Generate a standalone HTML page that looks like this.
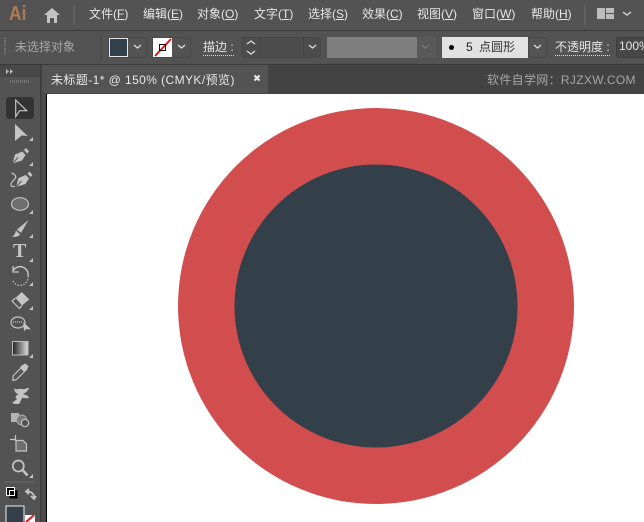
<!DOCTYPE html>
<html><head><meta charset="utf-8"><style>
html,body{margin:0;padding:0;background:#535353}
#r{position:relative;width:644px;height:522px;overflow:hidden;background:#535353;font-family:"Liberation Sans","Noto Sans CJK SC",sans-serif}
.a{position:absolute}
.t{position:absolute;white-space:nowrap;font-size:12px;line-height:16px;color:#e6e6e6}
.t u{text-underline-offset:1px}
.b{position:absolute;box-sizing:border-box;border:1px solid #484848;border-radius:3px}
svg{position:absolute;left:0;top:0}
</style></head><body><div id="r">
<div class="a" style="left:0;top:30px;width:644px;height:1px;background:#3a3a3a"></div>
<div class="a" style="left:0;top:31px;width:644px;height:33px;background:#535353"></div>
<div class="a" style="left:0;top:64px;width:644px;height:30px;background:#434343;border-top:1px solid #3a3a3a;box-sizing:border-box"></div>
<div class="t" style="left:9px;top:1px;font-size:20px;line-height:26px;font-weight:bold;color:#b07a56;transform:scaleX(.87);transform-origin:0 0">Ai</div>
<div class="t" style="left:89px;top:6px">文件(<u>F</u>)</div>
<div class="t" style="left:143px;top:6px">编辑(<u>E</u>)</div>
<div class="t" style="left:197px;top:6px">对象(<u>O</u>)</div>
<div class="t" style="left:254px;top:6px">文字(<u>T</u>)</div>
<div class="t" style="left:308px;top:6px">选择(<u>S</u>)</div>
<div class="t" style="left:362px;top:6px">效果(<u>C</u>)</div>
<div class="t" style="left:417px;top:6px">视图(<u>V</u>)</div>
<div class="t" style="left:472px;top:6px">窗口(<u>W</u>)</div>
<div class="t" style="left:531px;top:6px">帮助(<u>H</u>)</div>
<div class="t" style="left:15px;top:39px;color:#a8a8a8;font-size:12px">未选择对象</div>
<div class="b" style="left:108px;top:37px;width:39px;height:21px"></div>
<div class="a" style="left:109px;top:38px;width:19px;height:19px;background:#333f49;box-sizing:border-box;border:1px solid #e8e8e8"></div>
<div class="b" style="left:152px;top:37px;width:39px;height:21px"></div>
<div class="a" style="left:153px;top:38px;width:19px;height:19px;background:#fff"></div>
<div class="t" style="left:203px;top:40px;font-size:12px;border-bottom:1px dotted #ddd;line-height:15px">描边 :</div>
<div class="b" style="left:241px;top:37px;width:80px;height:21px;background:#4c4c4c"></div>
<div class="a" style="left:259px;top:38px;width:1px;height:19px;background:#444"></div>
<div class="a" style="left:303px;top:38px;width:1px;height:19px;background:#444"></div>
<div class="a" style="left:327px;top:37px;width:90px;height:21px;background:#7e7e7e"></div>
<div class="a" style="left:417px;top:37px;width:19px;height:21px;background:#595959"></div>
<div class="a" style="left:442px;top:37px;width:86px;height:21px;background:#e2e2e2"></div>
<div class="b" style="left:528px;top:37px;width:19px;height:21px"></div>
<div class="a" style="left:449px;top:45px;width:5px;height:5px;border-radius:50%;background:#000"></div>
<div class="t" style="left:466px;top:40px;font-size:12px;line-height:15px;color:#222">5</div>
<div class="t" style="left:479px;top:40px;font-size:12px;line-height:15px;color:#333">点圆形</div>
<div class="t" style="left:555px;top:40px;font-size:12px;line-height:15px;border-bottom:1px dotted #ddd">不透明度 :</div>
<div class="b" style="left:616px;top:37px;width:40px;height:21px;background:#474747;border-color:#3f3f3f"></div>
<div class="t" style="left:619px;top:38px;font-size:12px">100%</div>
<div class="a" style="left:42px;top:65px;width:226px;height:28px;background:#535353"></div>
<div class="t" style="left:51px;top:72px;font-size:12px;color:#e8e8e8;letter-spacing:.42px">未标题-1* @ 150% (CMYK/预览)</div>
<div class="t" style="left:487px;top:72px;font-size:12px;color:#a5a5a5;letter-spacing:.32px">软件自学网：RJZXW.COM</div>
<div class="a" style="left:0;top:65px;width:40px;height:457px;background:#535353"></div>
<div class="a" style="left:0;top:65px;width:40px;height:12px;background:#484848"></div>
<div class="a" style="left:40px;top:65px;width:1px;height:457px;background:#3c3c3c"></div>
<div class="a" style="left:41px;top:65px;width:1px;height:457px;background:#434343"></div>
<div class="a" style="left:42px;top:93px;width:4px;height:429px;background:#4c4c4c"></div>
<div class="a" style="left:46px;top:94px;width:598px;height:428px;background:#fff;border-left:1px solid #000;box-sizing:border-box"></div>
<div class="a" style="left:6px;top:97px;width:28px;height:22px;background:#333;border-radius:3px"></div>
<div class="t" style="left:13px;top:240px;font:bold 20px/22px 'Liberation Serif',serif;color:#c4c4c4">T</div>
<svg width="644" height="522" viewBox="0 0 644 522">
<circle cx="376" cy="306" r="198" fill="#d14d4e"/>
<circle cx="376" cy="306" r="141.500" fill="#333f49"/>
<path d="M44 15 L52 8 L60 15 H57 V23 H54 V18 H50 V23 H47 V15Z" fill="#c4c4c4"/>
<path d="M74 5V25" stroke="#666" stroke-width="1.500"/>
<path d="M585 5V25" stroke="#666" stroke-width="1.500"/>
<path d="M597 8h8v11h-8zM606 8h8v5h-8zM606 14h8v5h-8z" fill="#bdbdbd"/>
<path d="M623 12l4 3 4-3" fill="none" stroke="#ddd" stroke-width="1.300"/>
<path d="M5 38v18" stroke="#777" stroke-width="2" stroke-dasharray="1 1"/>
<path d="M101 34v27" stroke="#444"/>
<g fill="none" stroke="#ddd" stroke-width="1.300">
<path d="M134 45l3.500 3 3.500-3M178 45l3.500 3 3.500-3M309 45l3.500 3 3.500-3M534 45l3.500 3 3.500-3"/>
<path d="M247 44l4-3 4 3M247 51l4 3 4-3"/>
</g>
<path d="M422 45l3.500 3 3.500-3" fill="none" stroke="#777" stroke-width="1.300"/>
<path d="M155 56L171 39" stroke="#e8141c" stroke-width="2"/>
<rect x="159.500" y="44.500" width="6" height="6" fill="none" stroke="#111"/>
<path d="M254.500 75.500l5 5M259.500 75.500l-5 5" stroke="#eee" stroke-width="2"/>
<path d="M6 69l3 2.500-3 2.500zM10 69l3 2.500-3 2.500z" fill="#bbb"/>
<path d="M10 81.500h19" stroke="#777" stroke-width="3" stroke-dasharray="1 1"/>

<!-- selection -->
<path d="M15.700 100L26.700 110.700H19.500L15.700 116.700Z" fill="none" stroke="#c4c4c4" stroke-width="1.200"/>
<!-- direct -->
<path d="M15 124L27.700 136L21.700 135.500L15 141Z" fill="#c4c4c4"/>
<!-- pen -->
<path d="M12.500 163.500L15 154.500L22.500 151.500L25.500 155L22 160.500Z" fill="#c4c4c4"/>
<path d="M24 150L26 148L29 151.500L27 153.500Z" fill="#c4c4c4"/>
<path d="M12.500 163.500L18 157.500" stroke="#535353"/>
<!-- curvature -->
<path d="M16 187L18.500 178L26 175L29 178.500L25.500 184Z" fill="#c4c4c4"/>
<path d="M27.500 173.500L29.500 171.500L32.500 175L30.500 177Z" fill="#c4c4c4"/>
<path d="M16 187L21.500 181" stroke="#535353"/>
<path d="M11.500 173c3 1 5 3 4 5-1 2-5 4-4.500 7 .5 2 3 2 4 1" fill="none" stroke="#c4c4c4" stroke-width="1.200"/>
<!-- ellipse -->
<ellipse cx="20" cy="204" rx="8.500" ry="6.300" fill="#6e6e6e" stroke="#c4c4c4" stroke-width="1.200"/>
<!-- brush -->
<path d="M28.500 220L21 233L17 229.500Z" fill="#c4c4c4"/>
<path d="M16 230.500L20 234.500Q19 237 12 237Q15 235 16 230.500Z" fill="#c4c4c4"/>
<!-- rotate -->
<path d="M13 271a8 8 0 0 1 15 5" fill="none" stroke="#c4c4c4" stroke-width="1.500"/>
<path d="M28 276a8 8 0 0 1-15 5" fill="none" stroke="#c4c4c4" stroke-width="1.200" stroke-dasharray="1.500 1.500"/>
<path d="M13 266v6h6" fill="none" stroke="#c4c4c4" stroke-width="1.300"/>
<!-- eraser -->
<path d="M21.700 292L29.300 299.500L22 305.500L15.500 298Z" fill="#c4c4c4"/>
<path d="M15.500 298L12 301L19.500 308.500L22 305.500" fill="none" stroke="#c4c4c4" stroke-width="1.200"/>
<!-- shaper -->
<ellipse cx="18" cy="322.500" rx="7" ry="5.500" fill="none" stroke="#c4c4c4" stroke-width="1.200"/>
<path d="M13 322h10" stroke="#e0e0e0" stroke-dasharray="1 1"/>
<path d="M23.300 322L31 329.500L26 329L24 331.500Z" fill="#c4c4c4"/>
<!-- gradient -->
<defs><linearGradient id="g"><stop offset="0" stop-color="#222"/><stop offset="1" stop-color="#ddd"/></linearGradient></defs>
<rect x="12.500" y="341.500" width="15.500" height="13.500" fill="url(#g)" stroke="#bbb"/>
<!-- eyedropper -->
<path d="M13 376L21 368L24.500 371.500L16.500 379.500L13 380.500Z" fill="none" stroke="#c4c4c4" stroke-width="1.200"/>
<path d="M21 366L25 363.500L28.500 366L27 370L24.500 372L20 367.500Z" fill="#c4c4c4"/>
<!-- puppet warp -->
<path d="M14 388c2 3 5 0 8 1 3 1 6-2 7-1-1 3-4 5-6 6 2 1 5 1 6 4-3 1-5-1-7 0-1 2-2 5-3 6-3 0-5 0-7-1l5-4c-1-1-2-1-1-3 1-1 2-2 3-2-3 0-5-3-5-6z" fill="#c4c4c4"/>
<!-- shape builder -->
<rect x="11" y="413" width="8" height="9" fill="#b4b4b4"/>
<circle cx="21.700" cy="420" r="5" fill="#7a7a7a" stroke="#aaa"/>
<circle cx="25" cy="423" r="3.700" fill="#535353" stroke="#c4c4c4" stroke-width="1.200"/>
<!-- artboard -->
<path d="M10 439.500h6M15.500 435v6" stroke="#c4c4c4" stroke-width="1.200"/>
<path d="M16 440.500h7l3.500 3.500v7H16z" fill="#6e6e6e" stroke="#c4c4c4" stroke-width="1.200"/>
<!-- zoom -->
<circle cx="18.300" cy="466" r="5.500" fill="none" stroke="#c4c4c4" stroke-width="1.700"/>
<path d="M22.500 470l5 5.500" stroke="#c4c4c4" stroke-width="2.500"/>
<g fill="#c4c4c4">
<path d="M33 137v4h-4zM33 162v4h-4zM33 210v4h-4zM33 234v4h-4zM33 258v4h-4zM33 282v4h-4zM33 306v4h-4zM33 354v4h-4zM33 474v4h-4z"/>
</g>
<path d="M4 482h30" stroke="#6c6c6c"/>
<rect x="6.500" y="487.500" width="8" height="8" fill="#000" stroke="#fff"/>
<rect x="10" y="491" width="7" height="7" fill="#000" stroke="#000"/>
<rect x="9.500" y="490.500" width="5" height="5" fill="#000" stroke="#fff"/>
<path d="M29 489l-3 2.500 3 2.500M27 491.500c4 0 7 2 7 6M31 496l3 3 2-3" fill="none" stroke="#c4c4c4" stroke-width="1.800"/>
<rect x="25" y="515" width="10" height="7" fill="#fff"/>
<path d="M26 522l8-7" stroke="#e8141c" stroke-width="2"/>
<rect x="6" y="506" width="18" height="20" fill="#333f49" stroke="#eee"/>
</svg>
</div></body></html>
